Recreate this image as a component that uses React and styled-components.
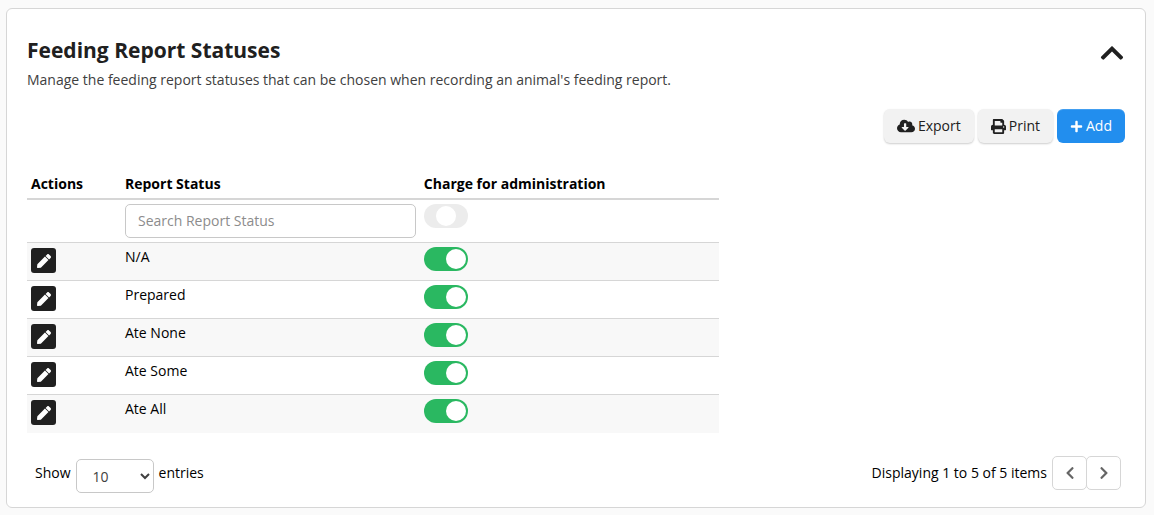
import React, { useState } from 'react'
import styled, { createGlobalStyle, css } from 'styled-components'
import { FaCloudDownloadAlt, FaPrint, FaPlus, FaChevronUp, FaChevronLeft, FaChevronRight, FaPen } from 'react-icons/fa'

const GlobalStyle = createGlobalStyle`
  * {
    box-sizing: border-box;
  }
  body {
    margin: 0;
    background: #fafafa;
    color: #000;
    font-family: 'Open Sans', 'Noto Sans', sans-serif;
    font-size: 14px;
    line-height: 20px;
  }
  button, input, select {
    font: inherit;
  }
`

const Card = styled.section`
  margin: 8px 8px 7px 6px;
  padding: 27px 20px 14px;
  background: #fff;
  border: 1px solid #d6d6d6;
  border-radius: 6px;
`

const Header = styled.header`
  display: flex;
  justify-content: space-between;
  align-items: flex-start;
`

const Title = styled.h2`
  margin: 0;
  color: #202020;
  font-size: 21px;
  font-weight: 700;
  line-height: 28px;
`

const Description = styled.p`
  margin: 6px 0 0;
  color: #404040;
`

const CollapseButton = styled.button`
  display: flex;
  padding: 4px 0 0;
  border: 0;
  background: none;
  color: #202020;
  font-size: 26px;
  cursor: pointer;
`

const Toolbar = styled.div`
  display: flex;
  justify-content: flex-end;
  gap: 4px;
  margin-top: 19px;
`

const Button = styled.button`
  display: flex;
  align-items: center;
  gap: 3px;
  height: 34px;
  padding: 0 13px;
  border: 0;
  border-radius: 6px;
  background: #f2f2f2;
  color: #202020;
  box-shadow: 0 1px 2px rgba(0, 0, 0, 0.2);
  cursor: pointer;
  ${({ $primary }) => $primary && css`
    background: #228eee;
    color: #fff;
    box-shadow: inset 0 1px 0 rgba(255, 255, 255, 0.15);
  `}
`

const Table = styled.table`
  width: 63%;
  min-width: 600px;
  margin-top: 27px;
  border-collapse: collapse;
  table-layout: fixed;
`

const Th = styled.th`
  width: ${({ $width }) => $width || 'auto'};
  padding: 4px;
  border-bottom: 2px solid #d6d6d6;
  font-weight: 700;
  text-align: left;
`

const Td = styled.td`
  height: 38px;
  padding: 4px;
  vertical-align: top;
`

const Row = styled.tr`
  border-top: 1px solid #d6d6d6;
  &:nth-child(even) {
    background: #f8f8f8;
  }
  &:first-child {
    border-top: 0;
  }
`

const SearchInput = styled.input`
  display: block;
  width: 100%;
  height: 34px;
  padding: 0 12px 2px;
  border: 1px solid #c8c8c8;
  border-radius: 5px;
  &::placeholder {
    color: #8c8c8c;
    opacity: 1;
  }
`

const EditButton = styled.button`
  display: flex;
  align-items: center;
  justify-content: center;
  width: 25px;
  height: 25px;
  margin-top: 1px;
  padding: 0;
  border: 0;
  border-radius: 3px;
  background: #202020;
  color: #fff;
  font-size: 14px;
  cursor: pointer;
`

const Switch = styled.input.attrs({ type: 'checkbox', role: 'switch' })`
  appearance: none;
  display: flex;
  align-items: center;
  justify-content: ${({ $unset, checked }) => $unset ? 'center' : checked ? 'flex-end' : 'flex-start'};
  width: 44px;
  height: 24px;
  margin: 0;
  padding: 2px;
  border-radius: 12px;
  background: ${({ $unset, checked }) => checked && !$unset ? '#2ab861' : '#ececec'};
  cursor: pointer;
  &::before {
    content: '';
    width: 20px;
    height: 20px;
    border-radius: 50%;
    background: #fff;
  }
`

const Footer = styled.footer`
  display: flex;
  justify-content: space-between;
  align-items: flex-start;
  margin-top: 23px;
  padding: 0 4px 0 8px;
`

const PageSize = styled.label`
  display: flex;
  gap: 5px;
  line-height: 34px;
`

const Select = styled.select`
  width: 78px;
  height: 34px;
  margin-top: 3px;
  padding: 2px 0 0 12px;
  border: 1px solid #c8c8c8;
  border-radius: 5px;
  background: #fff;
  color: #404040;
`

const Pager = styled.nav`
  display: flex;
  line-height: 34px;
`

const PageInfo = styled.span`
  margin-right: 5px;
`

const PageButton = styled.button`
  display: flex;
  align-items: center;
  justify-content: center;
  width: 35px;
  height: 34px;
  padding: 0;
  border: 1px solid #d6d6d6;
  border-radius: 5px;
  background: #fff;
  color: #666;
  font-size: 14px;
  cursor: pointer;
  & + & {
    margin-left: -1px;
  }
`

const initialStatuses = [
  { id: 1, name: 'N/A', charge: true },
  { id: 2, name: 'Prepared', charge: true },
  { id: 3, name: 'Ate None', charge: true },
  { id: 4, name: 'Ate Some', charge: true },
  { id: 5, name: 'Ate All', charge: true }
]

const App = () => {
  const [statuses, setStatuses] = useState(initialStatuses)
  const [search, setSearch] = useState('')
  // null means the charge column is not filtered
  const [chargeFilter, setChargeFilter] = useState(null)
  const [open, setOpen] = useState(true)

  const toggleCharge = id => {
    setStatuses(statuses.map(s => s.id === id ? { ...s, charge: !s.charge } : s))
  }

  const visible = statuses.filter(s => (
    s.name.toLowerCase().includes(search.toLowerCase()) &&
    (chargeFilter === null || s.charge === chargeFilter)
  ))

  return (
    <>
      <GlobalStyle />
      <Card>
        <Header>
          <div>
            <Title>Feeding Report Statuses</Title>
            <Description>Manage the feeding report statuses that can be chosen when recording an animal's feeding report.</Description>
          </div>
          <CollapseButton aria-label='Collapse' aria-expanded={open} onClick={() => setOpen(!open)}>
            <FaChevronUp />
          </CollapseButton>
        </Header>
        {open && (
          <>
            <Toolbar>
              <Button><FaCloudDownloadAlt size={18} />Export</Button>
              <Button><FaPrint size={15} />Print</Button>
              <Button $primary><FaPlus size={13} />Add</Button>
            </Toolbar>
            <Table>
              <thead>
                <tr>
                  <Th $width='94px'>Actions</Th>
                  <Th>Report Status</Th>
                  <Th>Charge for administration</Th>
                </tr>
              </thead>
              <tbody>
                <Row>
                  <Td />
                  <Td>
                    <SearchInput
                      aria-label='Search Report Status'
                      placeholder='Search Report Status'
                      value={search}
                      onChange={e => setSearch(e.target.value)}
                    />
                  </Td>
                  <Td>
                    <Switch
                      aria-label='Filter by charge for administration'
                      $unset={chargeFilter === null}
                      checked={chargeFilter === true}
                      onChange={() => setChargeFilter(!chargeFilter)}
                    />
                  </Td>
                </Row>
                {visible.map(status => (
                  <Row key={status.id}>
                    <Td>
                      <EditButton aria-label={`Edit ${status.name}`}><FaPen /></EditButton>
                    </Td>
                    <Td>{status.name}</Td>
                    <Td>
                      <Switch
                        aria-label={`Charge for administration: ${status.name}`}
                        checked={status.charge}
                        onChange={() => toggleCharge(status.id)}
                      />
                    </Td>
                  </Row>
                ))}
              </tbody>
            </Table>
            <Footer>
              <PageSize>
                Show
                <Select defaultValue='10'>
                  <option>10</option>
                  <option>25</option>
                  <option>50</option>
                </Select>
                entries
              </PageSize>
              <Pager aria-label='Pagination'>
                <PageInfo>Displaying 1 to {visible.length} of {visible.length} items</PageInfo>
                <PageButton aria-label='Previous page'><FaChevronLeft /></PageButton>
                <PageButton aria-label='Next page'><FaChevronRight /></PageButton>
              </Pager>
            </Footer>
          </>
        )}
      </Card>
    </>
  )
}

export default App
